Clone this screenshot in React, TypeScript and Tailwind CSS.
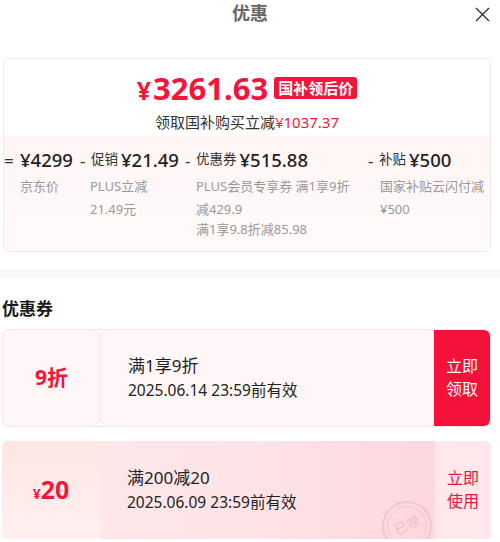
import React from 'react'

const font = { fontFamily: '"Noto Sans", "Noto Sans CJK SC", sans-serif' }

interface Part {
  sign: string
  label?: string
  amount: string
  lines: string[][]
  width: string
  pad: string
}

const parts: Part[] = [
  { sign: '=', amount: '¥4299', lines: [['京东价']], width: 'w-[76px]', pad: 'pl-[16px]' },
  { sign: '-', label: '促销', amount: '¥21.49', lines: [['PLUS立减', '21.49元']], width: 'w-[105px]', pad: 'pl-[10px]' },
  {
    sign: '-',
    label: '优惠券',
    amount: '¥515.88',
    lines: [['PLUS会员专享券 满1享9折', '减429.9'], ['满1享9.8折减85.98']],
    width: 'w-[183px]',
    pad: 'pl-[11px]',
  },
  { sign: '-', label: '补贴', amount: '¥500', lines: [['国家补贴云闪付减', '¥500']], width: 'flex-1', pad: 'pl-[12px]' },
]

function Breakdown({ part }: { part: Part }) {
  return (
    <div className={`${part.width} flex flex-col`}>
      <div className="flex items-center h-[22px] whitespace-nowrap">
        <span className="text-[17px] text-[#333] w-[10px] leading-none">{part.sign}</span>
        {part.label && <span className="text-[13.5px] text-[#333] ml-[1px] mr-[3px] leading-none">{part.label}</span>}
        <span className={`text-[18.5px] text-[#222] font-medium leading-none ${part.label ? '' : 'ml-[6px]'}`}>
          {part.amount}
        </span>
      </div>
      <div className={`${part.pad} mt-[4px] flex flex-col`}>
        {part.lines.map((block, i) => (
          <div key={i} className={`text-[13px] leading-[23px] text-[#999] whitespace-nowrap ${i > 0 ? '-mt-[3px]' : ''}`}>
            {block.map((l) => (
              <div key={l}>{l}</div>
            ))}
          </div>
        ))}
      </div>
    </div>
  )
}

export default function App() {
  return (
    <div className="w-[500px] h-[542px] bg-white overflow-hidden" style={font}>
      {/* header */}
      <div className="relative h-[26px] flex items-center justify-center">
        <span className="text-[18px] font-bold text-[#666] leading-none">优惠</span>
        <svg className="absolute right-[10px] top-[7px]" width="15" height="15" viewBox="0 0 15 15">
          <path d="M1 1L14 14M14 1L1 14" stroke="#333" strokeWidth="1.4" />
        </svg>
      </div>

      <div className="pl-[3px] pr-[9px] pt-[32px]">
        <div className="rounded-[6px] border border-[#ececec] overflow-hidden">
          <div className="bg-white pt-[12px] pb-[3px] flex flex-col items-center">
            <div className="flex items-center h-[34px]">
              <span className="text-[25px] font-bold text-[#f2163b] leading-none mt-[4px] mr-[2px]">¥</span>
              <span className="text-[31px] font-bold text-[#f2163b] leading-none">3261.63</span>
              <span className="ml-[6px] bg-[#f2163b] text-white text-[15px] font-bold rounded-[3px] px-[4px] h-[22px] leading-[22px]">
                国补领后价
              </span>
            </div>
            <div className="mt-[6px] text-[15px] leading-[22px] text-[#333]">
              领取国补购买立减<span className="text-[#f2163b]">¥1037.37</span>
            </div>
          </div>
          <div className="relative bg-gradient-to-b from-[#fff5f5] to-[#fffafa] pt-[13px] pb-[10px] flex">
            <div className="absolute -top-[5px] left-[242px] w-0 h-0 border-l-[5px] border-r-[5px] border-b-[5px] border-l-transparent border-r-transparent border-b-[#fff5f5]" />
            {parts.map((p) => (
              <Breakdown key={p.amount} part={p} />
            ))}
          </div>
        </div>
      </div>

      <div className="mt-[17px] h-[9px] bg-[#f6f7f9]" />

      <div className="pl-[2px] pr-[9px]">
        <div className="mt-[19px] text-[17px] font-bold text-[#1a1a1a] leading-[24px]">优惠券</div>

        {/* coupon 1 */}
        <div className="mt-[8px] h-[98px] flex rounded-[6px] border border-[#fbe4e8] bg-[#fff6f7] overflow-hidden">
          <div className="relative w-[98px] flex items-center justify-center border-r border-[#fbe4e8]">
            <span className="text-[21px] font-bold text-[#f2163b]">9折</span>
            <div className="absolute -right-[5px] -top-[5px] w-[10px] h-[10px] rounded-full bg-white border border-[#fbe4e8]" />
            <div className="absolute -right-[5px] -bottom-[5px] w-[10px] h-[10px] rounded-full bg-white border border-[#fbe4e8]" />
          </div>
          <div className="flex-1 pl-[27px] flex flex-col justify-center">
            <div className="text-[17px] text-[#222] leading-[25px]">满1享9折</div>
            <div className="text-[15.5px] text-[#222] leading-[25px]">2025.06.14 23:59前有效</div>
          </div>
          <div className="w-[56px] bg-[#f5123a] flex flex-col items-center justify-center text-white text-[16px] leading-[23px] rounded-r-[6px]">
            <span>立即</span>
            <span>领取</span>
          </div>
        </div>

        {/* coupon 2 */}
        <div className="relative mt-[14px] h-[98px] flex rounded-[6px] overflow-hidden bg-gradient-to-r from-[#fde9e9] via-[#fde4e7] to-[#fcd3db]">
          <div className="w-[98px] flex items-center justify-center bg-gradient-to-b from-[#fde6e3] to-[#fff0f0]">
            <span className="text-[14px] font-bold text-[#f2163b] mt-[6px]">¥</span>
            <span className="text-[25px] font-bold text-[#f2163b]">20</span>
          </div>
          <div className="flex-1 pl-[27px] flex flex-col justify-center">
            <div className="text-[17px] text-[#222] leading-[25px]">满200减20</div>
            <div className="text-[15.5px] text-[#222] leading-[25px]">2025.06.09 23:59前有效</div>
          </div>
          <div className="absolute left-[380px] top-[60px] w-[50px] h-[50px] rounded-full border-2 border-[#f2c6cf] flex items-center justify-center">
            <div className="w-[40px] h-[40px] rounded-full border border-[#f2c6cf] flex items-center justify-center">
              <span className="text-[13px] text-[#efbcc6] -rotate-[25deg]">已领</span>
            </div>
          </div>
          <div className="w-[56px] bg-[#fde8ec] flex flex-col items-center justify-center text-[#e8163b] text-[16px] leading-[23px]">
            <span>立即</span>
            <span>使用</span>
          </div>
        </div>
      </div>
    </div>
  )
}
